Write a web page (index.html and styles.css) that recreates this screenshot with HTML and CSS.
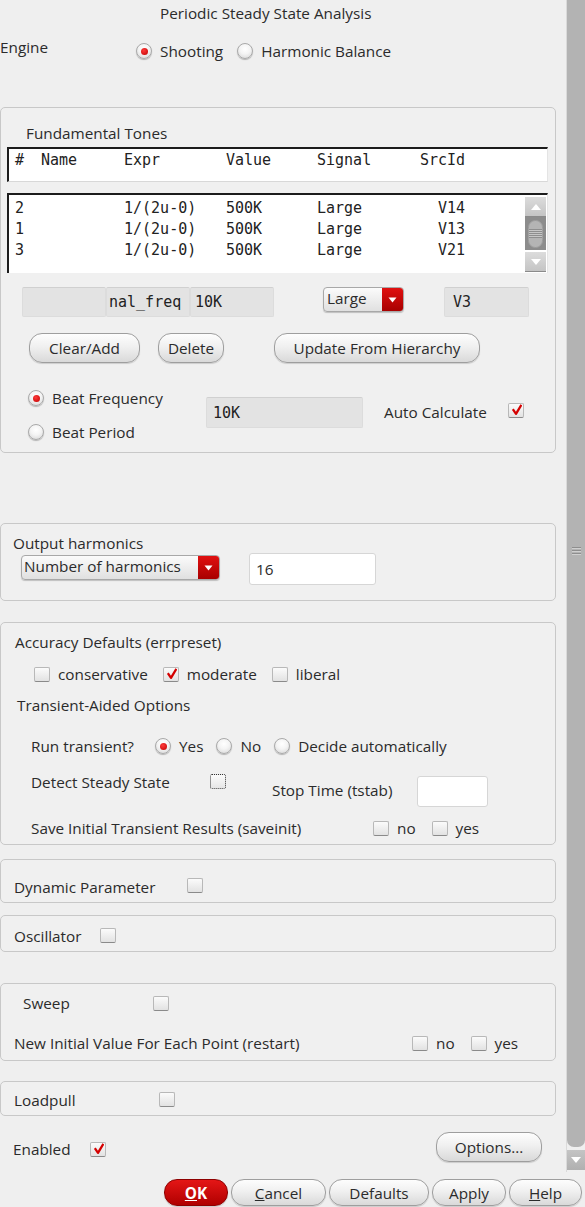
FILE: index.html
```html
<!DOCTYPE html>
<html>
<head>
<meta charset="utf-8">
<link rel="stylesheet" href="styles.css">
</head>
<body>
<div class="window">
  <div class="main">
    <div class="content">
      <div class="title">Periodic Steady State Analysis</div>

      <div class="engine-row">
        <span class="engine-label">Engine</span>
        <span class="opt"><span class="radio on"></span>Shooting</span>
        <span class="opt"><span class="radio"></span>Harmonic Balance</span>
      </div>

      <div class="group ft">
        <div class="ft-label">Fundamental Tones</div>
        <div class="tbl-head mono">
          <span>#</span><span>Name</span><span>Expr</span><span>Value</span><span>Signal</span><span>SrcId</span>
        </div>
        <div class="tbl-list">
          <div class="rows mono">
            <span>2</span><span></span><span>1/(2u-0)</span><span>500K</span><span>Large</span><span class="r">V14</span>
            <span>1</span><span></span><span>1/(2u-0)</span><span>500K</span><span>Large</span><span class="r">V13</span>
            <span>3</span><span></span><span>1/(2u-0)</span><span>500K</span><span>Large</span><span class="r">V21</span>
          </div>
          <div class="mini-scroll">
            <div class="ms-btn"><svg width="12" height="8" viewBox="0 0 12 8"><path d="M1 7 L6 1 L11 7 Z" fill="#fff"/></svg></div>
            <div class="ms-thumb"><span class="ms-grip"></span></div>
            <div class="ms-btn"><svg width="12" height="8" viewBox="0 0 12 8"><path d="M1 1 L6 7 L11 1 Z" fill="#fff"/></svg></div>
          </div>
        </div>
        <div class="fields-row">
          <div class="field f1"></div>
          <div class="field f2 mono">nal_freq</div>
          <div class="field f3 mono">10K</div>
          <div class="combo small"><span class="combo-text">Large</span><span class="combo-btn"><svg width="9" height="6" viewBox="0 0 9 6"><path d="M0.5 0.5 L8.5 0.5 L4.5 5.5 Z" fill="#fff"/></svg></span></div>
          <div class="field f4 mono">V3</div>
        </div>
        <div class="btn-row">
          <button class="btn b-clear">Clear/Add</button>
          <button class="btn b-delete">Delete</button>
          <button class="btn b-update">Update From Hierarchy</button>
        </div>
        <div class="beat-row">
          <div class="beat-radios">
            <span class="opt"><span class="radio on"></span>Beat Frequency</span>
            <span class="opt"><span class="radio"></span>Beat Period</span>
          </div>
          <div class="field beat-field mono">10K</div>
          <span class="auto-label">Auto Calculate</span>
          <span class="check on auto-cb"></span>
        </div>
      </div>

      <div class="group oh">
        <div class="oh-label">Output harmonics</div>
        <div class="oh-row">
          <div class="combo wide"><span class="combo-text">Number of harmonics</span><span class="combo-btn"><svg width="9" height="6" viewBox="0 0 9 6"><path d="M0.5 0.5 L8.5 0.5 L4.5 5.5 Z" fill="#fff"/></svg></span></div>
          <div class="field white oh-field">16</div>
        </div>
      </div>

      <div class="group acc">
        <div class="acc-label">Accuracy Defaults (errpreset)</div>
        <div class="acc-row">
          <span class="opt"><span class="check"></span>conservative</span>
          <span class="opt"><span class="check on"></span>moderate</span>
          <span class="opt"><span class="check"></span>liberal</span>
        </div>
        <div class="tao-label">Transient-Aided Options</div>
        <div class="run-row">
          <span class="run-label">Run transient?</span>
          <span class="opt"><span class="radio on"></span>Yes</span>
          <span class="opt"><span class="radio"></span>No</span>
          <span class="opt"><span class="radio"></span>Decide automatically</span>
        </div>
        <div class="detect-row">
          <span class="detect-label">Detect Steady State</span>
          <span class="check dotted"></span>
          <span class="stop-label">Stop Time (tstab)</span>
          <div class="field white stop-field"></div>
        </div>
        <div class="save-row">
          <span class="save-label">Save Initial Transient Results (saveinit)</span>
          <span class="opt"><span class="check"></span>no</span>
          <span class="opt"><span class="check"></span>yes</span>
        </div>
      </div>

      <div class="group dyn">
        <span class="dyn-label">Dynamic Parameter</span><span class="check"></span>
      </div>

      <div class="group osc">
        <span class="osc-label">Oscillator</span><span class="check"></span>
      </div>

      <div class="group sweep">
        <div class="sweep-row">
          <span class="sweep-label">Sweep</span><span class="check"></span>
        </div>
        <div class="restart-row">
          <span class="restart-label">New Initial Value For Each Point (restart)</span>
          <span class="opt"><span class="check"></span>no</span>
          <span class="opt"><span class="check"></span>yes</span>
        </div>
      </div>

      <div class="group lp">
        <span class="lp-label">Loadpull</span><span class="check"></span>
      </div>

      <div class="enabled-row">
        <span class="en-label">Enabled</span><span class="check on"></span>
        <button class="btn b-options">Options...</button>
      </div>
    </div>

    <div class="vscroll">
      <div class="vs-thumb"><span class="vs-grip"></span></div>
      <div class="vs-down"><svg width="12" height="8" viewBox="0 0 12 8"><path d="M1 1 L6 7 L11 1 Z" fill="#fff"/></svg></div>
    </div>
  </div>

  <div class="dialog-buttons">
    <button class="btn ok"><u>O</u>K</button>
    <button class="btn b-cancel"><u>C</u>ancel</button>
    <button class="btn b-defaults">Defaults</button>
    <button class="btn b-apply">Apply</button>
    <button class="btn b-help"><u>H</u>elp</button>
  </div>
</div>
</body>
</html>
```

FILE: styles.css
```css
* { box-sizing: border-box; }
html, body { margin: 0; padding: 0; }
body {
  background: #efefef;
  font-family: "Open Sans", "Noto Sans", sans-serif;
  font-size: 15.3px;
  color: #2b2b2b;
  width: 585px;
  height: 1207px;
  overflow: hidden;
}
.mono { font-family: "DejaVu Sans Mono", monospace; font-size: 15px; color: #222; }

.window { width: 585px; }
.main { display: flex; height: 1172px; }
.content { width: 566px; flex: none; }

/* generic widgets */
.opt { display: inline-flex; align-items: center; line-height: 20px; white-space: nowrap; }
.radio {
  width: 16px; height: 16px; border-radius: 50%;
  border: 1px solid #a9a9a9;
  background: radial-gradient(circle at 50% 35%, #ffffff 0%, #f4f4f4 45%, #d3d3d3 100%);
  box-shadow: 0 1px 1px rgba(0,0,0,0.25);
  display: inline-flex; align-items: center; justify-content: center;
  margin-right: 8px; flex: none;
}
.radio.on::after {
  content: ""; width: 7px; height: 7px; border-radius: 50%;
  background: radial-gradient(circle at 40% 35%, #ff3b3b, #c00000);
}
.check {
  width: 16px; height: 15px; border-radius: 2px;
  border: 1px solid #b8b8b8; border-bottom-color: #8a8a8a;
  background: linear-gradient(#fbfbfb, #e2e2e2);
  display: inline-block; position: relative; flex: none;
  margin-right: 8px;
}
.check.on::after {
  content: ""; position: absolute; left: 3px; top: 0px;
  width: 10px; height: 11px;
  background: no-repeat center/contain url("data:image/svg+xml;utf8,<svg xmlns='http://www.w3.org/2000/svg' viewBox='0 0 10 11'><path d='M0.8 5.2 L4 9.8 L9.4 0.8' fill='none' stroke='%23d40000' stroke-width='2.3' stroke-linejoin='round'/></svg>");
}
.check.dotted { border: 1px dotted #333; background: linear-gradient(#fbfbfb, #e6e6e6); }

.field {
  height: 30px; background: #e3e3e3;
  border: 1px solid #dcdcdc; border-top-color: #d0d0d0;
  border-radius: 2px;
  display: flex; align-items: center; padding-left: 4px;
  flex: none; white-space: nowrap; overflow: hidden;
}
.field.white { background: #fff; border-color: #d6d6d6; border-radius: 3px; }

.btn {
  font-family: "Open Sans", "Noto Sans", sans-serif; font-size: 15.3px; color: #2b2b2b;
  height: 30px; border-radius: 13px;
  border: 1px solid #9e9e9e;
  background: linear-gradient(#fdfdfd 0%, #f0f0f0 45%, #d9d9d9 100%);
  box-shadow: 0 1px 1px rgba(0,0,0,0.15);
  padding: 0; flex: none; cursor: default;
}

.combo {
  display: flex; height: 25px; border-radius: 4px;
  border: 1px solid #a8a8a8;
  background: linear-gradient(#fbfbfb, #e0e0e0);
  box-shadow: 0 1px 1px rgba(0,0,0,0.2);
  overflow: hidden; flex: none;
}
.combo-text { flex: 1; padding-left: 2px; line-height: 21px; white-space: nowrap; }
.combo-btn {
  width: 21px; flex: none;
  background: linear-gradient(#e01010, #a80000);
  display: flex; align-items: center; justify-content: center;
}

/* title / engine */
.title { height: 26px; line-height: 26px; padding-left: 160px; }
.engine-row { margin-top: 10px; height: 24px; display: flex; align-items: flex-start; }
.engine-label { width: 136px; line-height: 22px; flex: none; }
.engine-row .opt { margin-top: 5px; margin-right: 14px; }

/* groups */
.group {
  width: 556px; border: 1px solid #c8c8c8; border-radius: 5px;
  background: #f0f0f0;
}
.ft { margin-top: 47px; height: 346px; }
.ft-label { margin: 15px 0 0 25px; line-height: 20px; }
.tbl-head {
  margin: 4px 0 0 6px; width: 541px; height: 35px;
  background: #fff;
  border-top: 2px solid #1c1c1c; border-left: 2px solid #1c1c1c;
  border-right: 1px solid #e4e4e4; border-bottom: 1px solid #d8d8d8;
  display: grid; grid-template-columns: 26px 83px 102px 91px 103px 45px;
  padding: 1px 0 0 6px; line-height: 20px;
}
.tbl-list {
  margin: 11px 0 0 6px; width: 541px; height: 80px;
  background: #fff;
  border-top: 2px solid #1c1c1c; border-left: 2px solid #1c1c1c;
  border-right: 1px solid #e4e4e4;
  display: flex;
}
.rows {
  flex: 1; padding: 3px 0 0 6px;
  display: grid; grid-template-columns: 26px 83px 102px 91px 103px 45px;
  grid-auto-rows: 21px; line-height: 21px; align-content: start;
}
.rows .r { text-align: right; }
.mini-scroll { width: 21px; margin: 2px 1px 0 0; display: flex; flex-direction: column; }
.ms-btn {
  height: 20px; background: linear-gradient(#dcdcdc, #c4c4c4);
  border-bottom: 1px solid #8a8a8a;
  display: flex; align-items: center; justify-content: center;
}
.ms-thumb {
  height: 33px; margin: 0 0 2px 0; background: #8c8c8c;
  display: flex; align-items: center; justify-content: center;
}
.ms-grip {
  width: 15px; height: 28px; border-radius: 8px;
  background: repeating-linear-gradient(#b4b4b4 0 8px, #8e8e8e 8px 9px, #c6c6c6 9px 10px, #8e8e8e 10px 11px, #c6c6c6 11px 12px, #8e8e8e 12px 13px, #c6c6c6 13px 14px, #8e8e8e 14px 15px, #c6c6c6 15px 16px, #8e8e8e 16px 17px, #b4b4b4 17px 28px);
  border: 1px solid #a0a0a0;
}

.fields-row { margin: 14px 0 0 21px; display: flex; align-items: flex-start; }
.f1 { width: 84px; }
.f2 { width: 84px; padding-left: 2px; }
.f3 { width: 84px; }
.combo.small { width: 81px; margin-left: 49px; margin-top: 0; }
.combo.small .combo-text { padding-left: 3px; }
.f4 { width: 85px; margin-left: 40px; padding-left: 8px; }

.btn-row { margin: 16px 0 0 28px; display: flex; }
.b-clear { width: 111px; }
.b-delete { width: 66px; margin-left: 18px; }
.b-update { width: 206px; margin-left: 50px; }

.beat-row { margin: 25px 0 0 27px; display: flex; align-items: flex-start; }
.beat-radios { width: 178px; display: flex; flex-direction: column; gap: 14px; flex: none; }
.beat-field { width: 157px; height: 31px; margin-top: 9px; padding-left: 6px; }
.auto-label { margin: 14px 0 0 21px; line-height: 20px; width: 124px; flex: none; }
.auto-cb { margin-top: 15px; }

.oh { margin-top: 70px; height: 78px; }
.oh-label { margin: 9px 0 0 12px; line-height: 20px; }
.oh-row { display: flex; align-items: flex-start; margin-left: 20px; }
.combo.wide { width: 199px; margin-top: 2px; }
.oh-field { width: 127px; height: 32px; margin-left: 29px; padding-left: 6px; }

.acc { margin-top: 21px; height: 223px; }
.acc-label { margin: 9px 0 0 14px; line-height: 20px; }
.acc-row { margin: 12px 0 0 33px; display: flex; gap: 15px; }
.tao-label { margin: 11px 0 0 16px; line-height: 20px; }
.run-row { margin: 21px 0 0 30px; display: flex; align-items: center; }
.run-label { width: 124px; line-height: 20px; flex: none; }
.run-row .opt { margin-right: 13px; }
.detect-row { margin: 16px 0 0 30px; display: flex; align-items: flex-start; height: 35px; }
.detect-label { width: 179px; line-height: 20px; flex: none; }
.detect-row .check { margin-top: 2px; margin-right: 0; }
.stop-label { margin: 8px 0 0 46px; width: 145px; line-height: 20px; flex: none; }
.stop-field { width: 71px; height: 31px; margin-top: 4px; }
.save-row { margin: 11px 0 0 30px; display: flex; align-items: center; }
.save-label { width: 342px; line-height: 20px; flex: none; }
.save-row .opt { margin-right: 16px; }

.dyn { margin-top: 14px; height: 44px; padding: 17px 0 0 13px; display: flex; align-items: flex-start; }
.dyn-label { width: 173px; line-height: 20px; }
.dyn .check { margin-top: 1px; }

.osc { margin-top: 12px; height: 37px; padding: 10px 0 0 13px; display: flex; align-items: flex-start; }
.osc-label { width: 86px; line-height: 20px; }
.osc .check { margin-top: 2px; }

.sweep { margin-top: 31px; height: 78px; }
.sweep-row { margin: 9px 0 0 22px; display: flex; align-items: center; }
.sweep-label { width: 130px; line-height: 20px; }
.restart-row { margin: 20px 0 0 13px; display: flex; align-items: center; }
.restart-label { width: 398px; line-height: 20px; flex: none; }
.restart-row .opt { margin-right: 16px; }

.lp { margin-top: 20px; height: 35px; padding: 8px 0 0 13px; display: flex; align-items: flex-start; }
.lp-label { width: 145px; line-height: 20px; }
.lp .check { margin-top: 2px; }

.enabled-row { margin-top: 16px; width: 556px; height: 30px; display: flex; align-items: center; padding-left: 13px; }
.en-label { width: 77px; line-height: 20px; padding-top: 4px; }
.enabled-row .check { margin-top: 4px; }
.b-options { width: 106px; margin-left: auto; margin-right: 14px; }

/* window scrollbar */
.vscroll { width: 19px; flex: none; border-left: 1px solid #dadada; display: flex; flex-direction: column; }
.vs-thumb {
  height: 1147px; background: #b3b3b3;
  border-radius: 0 0 7px 7px;
  display: flex; align-items: center; justify-content: center;
}
.vs-grip {
  width: 9px; height: 9px; margin-top: -44px;
  background: repeating-linear-gradient(#8e8e8e 0 1px, #cfcfcf 1px 2px, transparent 2px 3px);
}
.vs-down {
  margin-top: 3px; height: 20px; background: linear-gradient(#c4c4c4, #b0b0b0);
  display: flex; align-items: center; justify-content: center;
}

/* dialog buttons */
.dialog-buttons { margin-top: 7px; padding-left: 164px; display: flex; gap: 3px; }
.dialog-buttons .btn { height: 27px; }
.ok {
  width: 64px; color: #fff; font-weight: bold;
  background: linear-gradient(#e41616, #b00000) !important;
  border-color: #8e0000 !important;
}
.b-cancel { width: 95px; }
.b-defaults { width: 100px; }
.b-apply { width: 74px; }
.b-help { width: 73px; }
```
